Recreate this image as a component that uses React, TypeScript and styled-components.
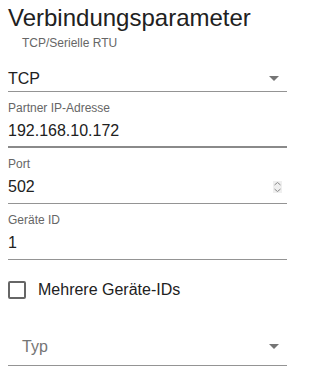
import React, {useState} from "react";
import styled, {createGlobalStyle} from "styled-components";

const GlobalStyle = createGlobalStyle`
  html, body {
    margin: 0;
    padding: 0;
    background: #ffffff;
  }
  body {
    font-family: "Liberation Sans", Arial, sans-serif;
    color: rgba(0, 0, 0, 0.87);
  }
`

const ArrowIcon = () => (
    <svg width="10" height="5" viewBox="0 0 10 5">
        <path d="M0 0 L10 0 L5 5 Z" fill="#757575"/>
    </svg>
)

const SpinIcon = () => (
    <Spinner>
        <svg width="9" height="12" viewBox="0 0 9 12">
            <path d="M1.5 4 L4.5 1.5 L7.5 4" fill="none" stroke="#8a8a8a" strokeWidth="1"/>
            <path d="M1.5 8 L4.5 10.5 L7.5 8" fill="none" stroke="#8a8a8a" strokeWidth="1"/>
        </svg>
    </Spinner>
)

export default function App() {
    const [multi, setMulti] = useState<boolean>(false)

    return (
        <Page>
            <GlobalStyle/>
            <Title>Verbindungsparameter</Title>

            <SelectField>
                <SelectLabel>TCP/Serielle RTU</SelectLabel>
                <SelectRow>
                    <Value>TCP</Value>
                    <ArrowIcon/>
                </SelectRow>
            </SelectField>

            <TextField $focused>
                <Label>Partner IP-Adresse</Label>
                <InputRow>
                    <Value>192.168.10.172</Value>
                </InputRow>
            </TextField>

            <TextField>
                <Label>Port</Label>
                <InputRow>
                    <Value>502</Value>
                    <SpinIcon/>
                </InputRow>
            </TextField>

            <TextField>
                <Label>Geräte ID</Label>
                <InputRow>
                    <Value>1</Value>
                </InputRow>
            </TextField>

            <CheckRow onClick={() => setMulti(!multi)}>
                <Box $checked={multi}/>
                <CheckText>Mehrere Geräte-IDs</CheckText>
            </CheckRow>

            <TypField>
                <SelectRow>
                    <Placeholder>Typ</Placeholder>
                    <ArrowIcon/>
                </SelectRow>
            </TypField>
        </Page>
    )
}

const Page = styled.div`
  width: 279px;
  padding: 0 8px;
  display: flex;
  flex-direction: column;
`

const Title = styled.h1`
  margin: 0;
  padding-top: 4px;
  font-size: 24px;
  line-height: 28px;
  font-weight: 400;
  color: #212121;
`

const SelectField = styled.div`
  padding-top: 4px;
  border-bottom: 1px solid #949494;
`

const SelectLabel = styled.div`
  padding-left: 14px;
  font-size: 12px;
  line-height: 14px;
  color: #666666;
`

const SelectRow = styled.div`
  display: flex;
  align-items: center;
  justify-content: space-between;
  padding: 0 8px 2px 0;
  height: 21px;
  margin-top: 18px;
`

const TextField = styled.div<{ $focused?: boolean }>`
  padding: 9px 0 ${p => p.$focused ? 5 : 6}px;
  border-bottom: ${p => p.$focused ? '2px solid #8a8a8a' : '1px solid #949494'};
`

const Label = styled.div`
  font-size: 12px;
  line-height: 14px;
  color: #666666;
`

const InputRow = styled.div`
  display: flex;
  align-items: center;
  justify-content: space-between;
  margin-top: 6px;
  height: 20px;
  padding-right: 5px;
`

const Value = styled.span`
  font-size: 16px;
  line-height: 20px;
  color: #212121;
`

const Placeholder = styled.span`
  padding-left: 14px;
  font-size: 16px;
  line-height: 20px;
  color: #757575;
`

const Spinner = styled.div`
  width: 9px;
  height: 12px;
  background: #efefef;
  display: flex;
  align-items: center;
  justify-content: center;
`

const CheckRow = styled.label`
  display: flex;
  align-items: center;
  gap: 12px;
  margin-top: 20px;
  cursor: pointer;
`

const Box = styled.span<{ $checked: boolean }>`
  width: 14px;
  height: 14px;
  border: 2px solid #666666;
  border-radius: 2px;
  background: ${p => p.$checked ? '#666666' : 'transparent'};
`

const CheckText = styled.span`
  font-size: 16px;
  line-height: 20px;
  color: #212121;
`

const TypField = styled.div`
  margin-top: 36px;
  padding-bottom: 6px;
  border-bottom: 1px solid #949494;

  ${SelectRow} {
    margin-top: 0;
  }
`
